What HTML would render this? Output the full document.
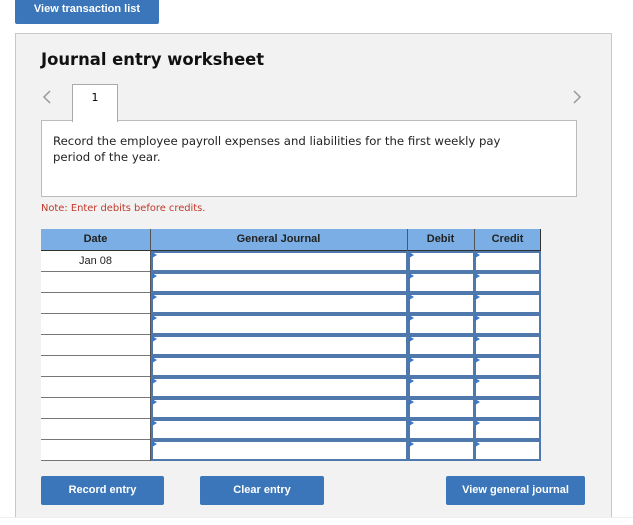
<!DOCTYPE html>
<html><head><style>
*{margin:0;padding:0;box-sizing:border-box}
body{width:633px;height:525px;background:#fff;position:relative;overflow:hidden;font-family:"Liberation Sans",Arial,sans-serif}
.abs{position:absolute}
.btn{position:absolute;background:#3a76b9;color:#fff;font-size:11px;font-weight:bold;text-align:center;border-radius:2px}
.vf{font-family:"DejaVu Sans",Verdana,sans-serif}
.cell{position:absolute;background:#fff}
.inp{position:absolute;background:#fff;border:2px solid #4f78ad}
.inp:before{content:"";position:absolute;left:-1px;top:-1px;border-left:5px solid #3a76c9;border-top:3px solid transparent;border-bottom:3px solid transparent}
</style></head><body>
<div class="btn" style="left:15px;top:-4px;width:144px;height:28px;line-height:27px;">View transaction list</div>
<div class="abs" style="left:15px;top:33px;width:597px;height:485px;background:#f2f2f2;border:1px solid #c8c8c8"></div>
<div class="abs" style="left:0;top:517px;width:633px;height:1px;background:#eee"></div>
<div class="abs vf" style="left:41px;top:50px;font-size:16.4px;font-weight:bold;color:#111">Journal entry worksheet</div>
<svg class="abs" style="left:42px;top:90px" width="10" height="14"><path d="M8 1 L2 7 L8 13" fill="none" stroke="#999" stroke-width="1.5"/></svg>
<svg class="abs" style="left:572px;top:90px" width="10" height="14"><path d="M2 1 L8 7 L2 13" fill="none" stroke="#999" stroke-width="1.5"/></svg>
<div class="abs vf" style="left:72px;top:84px;width:46px;height:38px;background:#fff;border:1px solid #aaa;border-bottom:none;font-size:11px;text-align:center;line-height:26px;z-index:2">1</div>
<div class="abs vf" style="left:41px;top:120px;width:536px;height:77px;background:#fff;border:1px solid #bbb;padding:12px 11px;font-size:11.7px;line-height:16px;color:#222">Record the employee payroll expenses and liabilities for the first weekly pay<br>period of the year.</div>
<div class="abs vf" style="left:41px;top:203px;font-size:9.9px;color:#c0392b">Note: Enter debits before credits.</div>
<div class="abs" style="left:41px;top:229px;width:500px;height:22px;background:#7aaee4;border-bottom:1px solid #333"></div>
<div class="abs" style="left:150px;top:229px;width:1px;height:232px;background:#555"></div>
<div class="abs" style="left:407px;top:229px;width:1px;height:22px;background:#555"></div>
<div class="abs" style="left:474px;top:229px;width:1px;height:22px;background:#555"></div>
<div class="abs" style="left:540px;top:229px;width:1px;height:22px;background:#333"></div>
<div class="abs" style="left:41px;top:233px;width:109px;text-align:center;font-size:11px;font-weight:bold;color:#222">Date</div>
<div class="abs" style="left:150px;top:233px;width:257px;text-align:center;font-size:11px;font-weight:bold;color:#222">General Journal</div>
<div class="abs" style="left:407px;top:233px;width:67px;text-align:center;font-size:11px;font-weight:bold;color:#222">Debit</div>
<div class="abs" style="left:474px;top:233px;width:67px;text-align:center;font-size:11px;font-weight:bold;color:#222">Credit</div>
<div id="rows"></div>
<script>
var h='';for(var i=0;i<10;i++){var y=251+i*21;
h+='<div class="cell" style="left:41px;top:'+y+'px;width:109px;height:21px;border-bottom:1px solid #777;font-size:11px;text-align:center;line-height:20px;color:#222">'+(i==0?'Jan 08':'')+'</div>';
h+='<div class="inp" style="left:151px;top:'+y+'px;width:257px;height:21px"></div>';
h+='<div class="inp" style="left:408px;top:'+y+'px;width:67px;height:21px"></div>';
h+='<div class="inp" style="left:474px;top:'+y+'px;width:67px;height:21px"></div>';}
document.getElementById('rows').innerHTML=h;
</script>
<div class="btn" style="left:41px;top:476px;width:123px;height:29px;line-height:29px">Record entry</div>
<div class="btn" style="left:200px;top:476px;width:124px;height:29px;line-height:29px">Clear entry</div>
<div class="btn" style="left:446px;top:476px;width:139px;height:29px;line-height:29px">View general journal</div>
</body></html>
